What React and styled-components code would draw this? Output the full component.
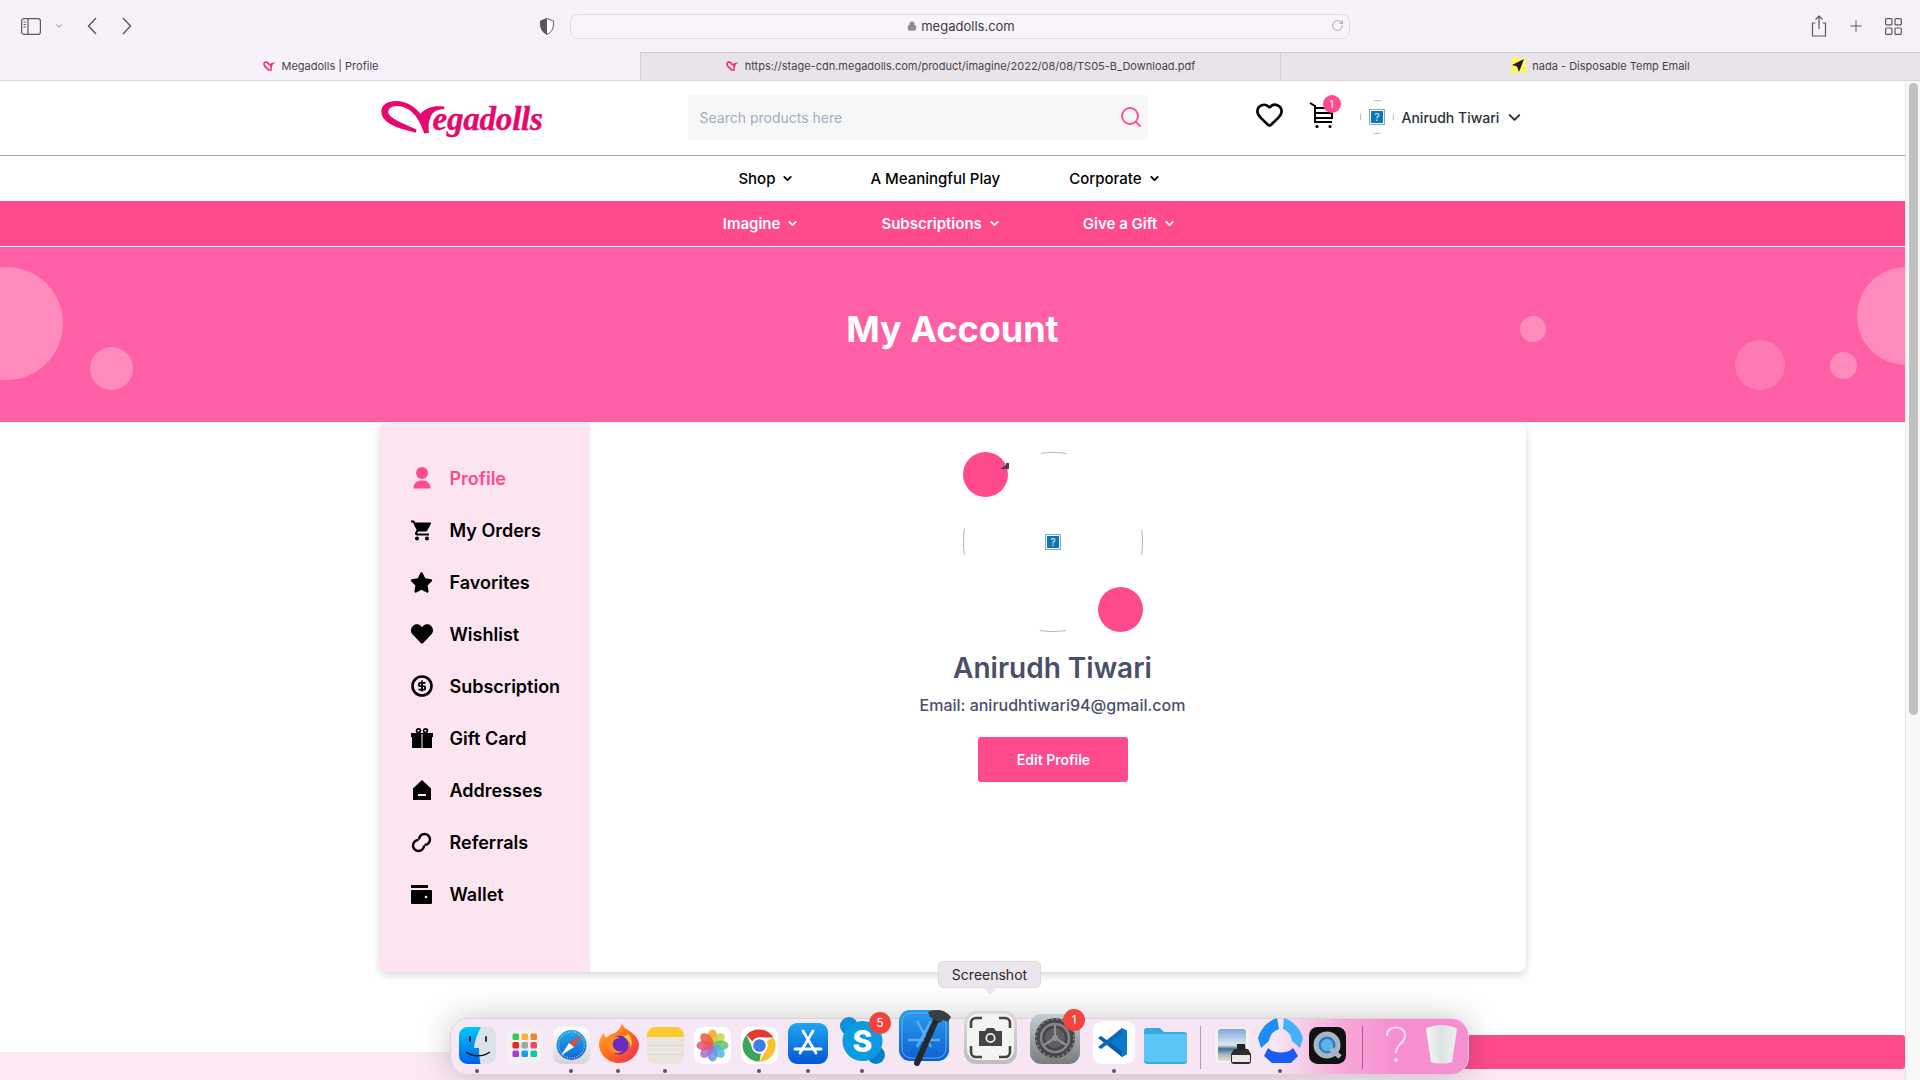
import React from "react";
import styled, { createGlobalStyle } from "styled-components";
import { ChevronDown, Search, Heart, Lock, RotateCw, Plus } from "lucide-react";
import { FaHeart, FaStar } from "react-icons/fa";
import { MdShoppingCart } from "react-icons/md";

const Global = createGlobalStyle`
  html, body { margin: 0; padding: 0; background: #fff; }
  body { font-family: Inter, "Liberation Sans", sans-serif; }
  * { box-sizing: border-box; }
`;

const Screen = styled.div`
  position: relative; width: 1920px; height: 1080px; overflow: hidden;
  display: flex; flex-direction: column; background: #fff;
`;

/* ---------- browser chrome ---------- */
const Toolbar = styled.div`
  height: 52px; flex: none; background: #f7f2f9; display: flex; align-items: center; color: #6b676e;
`;
const LeftCluster = styled.div`
  margin-left: 21px; width: 519px; display: flex; align-items: center;
`;
const NavArrow = styled.svg`
  width: 10px; height: 18px; margin-left: ${p => p.$ml}px; fill: none; stroke: #5c585f; stroke-width: 1.4;
`;
const UrlBar = styled.div`
  margin-left: 16px; width: 780px; height: 25px; border: 1px solid #e2dde5; border-radius: 8px;
  background: #f8f4fa; display: flex; align-items: center; justify-content: center; position: relative;
  font-size: 13px; color: #3d3a40; gap: 4px; padding-left: 2px;
`;
const Reload = styled.span`
  position: absolute; right: 5px; top: 4px; display: flex; color: #8a868d;
`;
const RightTools = styled.div`
  margin-left: auto; margin-right: 18px; display: flex; align-items: center; gap: 20px;
`;
const Tabs = styled.div`
  height: 29px; flex: none; display: flex; border-bottom: 1px solid #d8d5d9;
`;
const Tab = styled.div`
  flex: 1; display: flex; align-items: center; justify-content: center; gap: 6px; font-size: 11px; padding-bottom: 2px;
  color: #47444a; background: ${p => (p.$active ? "#f7f2f9" : "#e8e4ea")};
  border-top: 1px solid ${p => (p.$active ? "#f7f2f9" : "#cfcbd0")};
  border-left: 1px solid ${p => (p.$first ? "transparent" : "#d4d0d5")};
`;

/* ---------- page ---------- */
const Viewport = styled.div`
  flex: 1; display: flex; min-height: 0;
`;
const Page = styled.div`
  flex: 1; min-width: 0; display: flex; flex-direction: column; overflow: hidden;
`;
const Scrollbar = styled.div`
  width: 15px; flex: none; background: #f8f8f8; border-left: 1px solid #e6e6e6; padding: 2px 2px 0 3px;
`;
const ScrollThumb = styled.div`
  height: 632px; background: #c1c1c1; border-radius: 5px;
`;
const Header = styled.header`
  height: 75px; flex: none; border-bottom: 1px solid #a3a8b2; display: flex; justify-content: center;
`;
const HeaderInner = styled.div`
  width: 1146px; flex: none; display: flex; align-items: center; padding-bottom: 2px;
`;
const LogoWrap = styled.div`
  width: 308px; flex: none; display: flex; align-items: center; margin-bottom: 1px;
`;
const LogoText = styled.span`
  font-family: "Liberation Serif", serif; font-weight: 700; font-style: italic; font-size: 33px; letter-spacing: -0.2px;
  color: #e6086f; margin-left: -13px; margin-top: 4px; line-height: 30px; -webkit-text-stroke: .4px #e6086f;
`;
const SearchBox = styled.div`
  width: 460px; height: 45px; flex: none; background: #f7f7f7; border-radius: 4px; display: flex; align-items: center;
  justify-content: space-between; padding: 0 5px 0 12px; font-size: 14px; color: #a0aec0;
`;
const Actions = styled.div`
  margin-left: 107px; display: flex; align-items: center; color: #000; flex: none;
`;
const HeartWrap = styled.span`
  display: flex; margin-bottom: 5px;
`;
const CartWrap = styled.div`
  position: relative; margin-left: 24px; margin-bottom: 4px; width: 28px; height: 28px; display: flex;
`;
const CountBadge = styled.span`
  position: absolute; left: 15px; top: -6px; width: 18px; height: 18px; border-radius: 50%; background: #ff4a8d;
  color: #fff; font-size: 10px; display: flex; align-items: center; justify-content: center;
`;
const SmallAvatar = styled.div`
  margin-left: 24px; width: 34px; height: 34px; position: relative; display: flex; align-items: center; justify-content: center;
`;
const UserName = styled.span`
  margin-left: 8px; font-size: 14px; font-weight: 500; color: #2d3036; white-space: nowrap;
`;
const UserChevron = styled.span`
  margin-left: 6px; display: flex; color: #2d3036;
`;
const NavRow = styled.nav`
  height: ${p => p.$h}px; flex: none; display: flex; align-items: center; justify-content: center; gap: ${p => p.$gap}px;
  padding-right: ${p => p.$pr}px; color: ${p => (p.$pink ? "#fff" : "#000")}; background: ${p => (p.$pink ? "#ff4a8d" : "#fff")};
  font-weight: ${p => (p.$pink ? 600 : 500)}; font-size: 15px;
  ${p => p.$pink && "border-bottom: 1px solid #fff;"}
`;
const NavItem = styled.span`
  display: inline-flex; align-items: center; gap: 6px; margin-right: ${p => p.$mr || 0}px;
`;
const Hero = styled.section`
  position: relative; height: 175px; flex: none; background: #ff5fa5; overflow: hidden;
  display: flex; align-items: center; justify-content: center;
`;
const HeroTitle = styled.h1`
  margin: -11px 0 0; font-size: 36px; font-weight: 700; color: #fff; line-height: 44px;
`;
const Bubble = styled.span`
  position: absolute; left: ${p => p.$x}px; top: ${p => p.$y}px; width: ${p => p.$d}px; height: ${p => p.$d}px;
  border-radius: 50%; background: ${p => p.$c || "#ff8bbd"};
`;
const Card = styled.main`
  width: 1146px; height: 549px; flex: none; margin: 1px auto 0; display: flex; border-radius: 8px; background: #fff;
  box-shadow: 0 3px 9px rgba(0,0,0,.16); overflow: hidden;
`;
const Sidebar = styled.aside`
  width: 210px; flex: none; background: #fde4f1; padding: 29px 0 0 30px; display: flex; flex-direction: column;
`;
const MenuItem = styled.div`
  height: 52px; display: flex; align-items: center; gap: 16px; font-size: 18px; font-weight: 600;
  color: ${p => (p.$active ? "#ff4a8d" : "#000")};
`;
const MenuIcon = styled.span`
  width: 24px; height: 24px; display: flex; align-items: center; justify-content: center;
`;
const Content = styled.div`
  flex: 1; display: flex; flex-direction: column; align-items: center; padding: 29px 10px 0 0; color: #4a4f68;
`;
const AvatarBox = styled.div`
  position: relative; width: 180px; height: 180px; display: flex; align-items: center; justify-content: center;
`;
const AvatarDot = styled.span`
  position: absolute; width: 45px; height: 45px; border-radius: 50%; background: #ff4a8d;
  ${p => (p.$end ? "right: 0; bottom: 0;" : "left: 0; top: 0;")}
`;
const TinyMark = styled.svg`
  position: absolute; left: 37px; top: 11px; width: 9px; height: 6px;
`;
const Name = styled.h2`
  margin: 19px 0 0; font-size: 28px; line-height: 34px; font-weight: 600;
`;
const Email = styled.p`
  margin: 8px 0 0; font-size: 16px; line-height: 24px; font-weight: 500;
`;
const EditButton = styled.button`
  margin-top: 20px; width: 150px; height: 45px; border: 0; border-radius: 3px; background: #ff4a8d; color: #fff;
  font-family: inherit; font-size: 14px; font-weight: 600; padding: 0 0 0 2px;
`;
const Footer = styled.footer`
  flex: 1; margin-top: 80px; background: #fae9f2; display: flex; justify-content: flex-end; align-items: flex-start;
`;
const FooterBar = styled.div`
  width: 660px; height: 34px; margin-top: -17px; background: #ff4a8d; border-radius: 3px;
`;

/* ---------- dock ---------- */
const Dock = styled.div`
  position: absolute; left: 450px; top: 1018px; width: 1019px; height: 57px; border-radius: 18px;
  display: flex; align-items: flex-end; padding: 0 5px 10px 2px; border: 1px solid #dcd2dc;
  background: linear-gradient(90deg, #f6e8f4 0%, #f6e6f3 81%, #f7a6d8 88%, #f68fd0 93%, #f68fd0 100%);
  box-shadow: 0 0 32px rgba(0,0,0,.22);
`;
const DockSlot = styled.div`
  position: relative; width: ${p => p.$w}px; flex: none; display: flex; justify-content: center; align-items: flex-end;
`;
const DockDot = styled.span`
  position: absolute; left: 50%; bottom: -9px; margin-left: -2px; width: 4px; height: 4px; border-radius: 50%; background: #5c5560;
`;
const DockBadge = styled.span`
  position: absolute; left: ${p => p.$x}px; top: ${p => p.$y}px; width: 22px; height: 22px; border-radius: 50%;
  background: #f0443c; color: #fff; font-size: 11.5px; display: flex; align-items: center; justify-content: center;
`;
const Separator = styled.div`
  width: ${p => p.$w}px; flex: none; height: 43px; margin-bottom: -5px; display: flex; justify-content: center;
  &::before { content: ""; width: 1px; height: 100%; background: ${p => p.$c}; }
`;
const DockTip = styled.div`
  position: absolute; left: 938px; top: 961px; width: 103px; height: 27px; border-radius: 5px; background: #ece6ec;
  border: 1px solid #dfd9df; color: #2b282c; font-size: 14px; display: flex; align-items: center; justify-content: center;
  &::after {
    content: ""; position: absolute; left: 44px; bottom: -8px; border-left: 7px solid transparent;
    border-right: 7px solid transparent; border-top: 8px solid #ece6ec;
  }
`;

/* ---------- drawings ---------- */
const Tangents = ({ size, dash, stroke = "#b5b5b5" }) => {
  const r = size / 2 - 0.5;
  const c = 2 * Math.PI * r;
  return (
    <svg width={size} height={size} style={{ position: "absolute", left: 0, top: 0 }}>
      <circle cx={size / 2} cy={size / 2} r={r} fill="none" stroke={stroke} strokeWidth="1"
        strokeDasharray={`${dash} ${c / 4 - dash}`} strokeDashoffset={dash / 2} />
    </svg>
  );
};
const BrokenImage = ({ s = 16 }) => (
  <svg width={s} height={s} viewBox="0 0 16 16">
    <rect x=".5" y=".5" width="15" height="15" fill="#fff" stroke="#7fa9cc" />
    <rect x="2" y="2" width="12" height="12" fill="#0b78b5" />
    <text x="8" y="12" textAnchor="middle" fontSize="10" fontFamily="Inter, sans-serif" fill="#e6f2fa">?</text>
  </svg>
);
const LogoMark = () => (
  <svg width="66" height="36" viewBox="28 30 166 92">
    <path fill="#e6086f" d="M30 62C30 42 52 32 78 36C100 40 118 52 130 68C145 52 165 46 192 50L190 56C172 56 160 62 155 78C150 92 150 105 152 116L140 118C132 100 130 92 122 80C108 58 88 48 70 48C55 48 46 56 48 66C52 80 85 92 120 108L118 116C85 108 30 95 30 62Z" />
  </svg>
);
const Fav = () => (
  <svg width="13" height="12" viewBox="0 0 26 24">
    <path fill="none" stroke="#ee2c7c" strokeWidth="3.4" d="M13 10C10 3 2 2 2 8c0 6 8 10 11 13" />
    <path fill="#ee2c7c" d="M13 10c3-5 9-6 12-4-4 0-6 3-7 8l-1 8h-3l1-8z" />
  </svg>
);
const PlaneFav = () => (
  <svg width="15" height="15" viewBox="0 0 15 15">
    <rect width="15" height="15" fill="#fdf86a" />
    <path fill="#1c1c1c" d="M13 1L1 7l5 1.5L8 14z" />
  </svg>
);
const ChevSm = () => <ChevronDown size={13} strokeWidth={3.4} />;

const ProfileIcon = () => (
  <svg width="20" height="22" viewBox="0 0 20 22" fill="currentColor">
    <circle cx="10" cy="6" r="6" />
    <path d="M1.5 21.5c0-5.5 3.5-8 8.5-8s8.5 2.500 8.500 8z" />
  </svg>
);
const DollarRing = () => (
  <svg width="22" height="22" viewBox="0 0 22 22">
    <circle cx="11" cy="11" r="9.500" fill="none" stroke="#000" strokeWidth="2.600" />
    <path d="M14.500 7.800H9.500a1.700 1.700 0 0 0 0 3.400h3a1.700 1.700 0 0 1 0 3.400H7.500M11 5.500v11" fill="none" stroke="#000" strokeWidth="1.800" />
  </svg>
);
const GiftIcon = () => (
  <svg width="22" height="20" viewBox="0 0 22 20">
    <circle cx="7.500" cy="2.800" r="1.900" fill="none" stroke="#000" strokeWidth="1.800" />
    <circle cx="14.500" cy="2.800" r="1.900" fill="none" stroke="#000" strokeWidth="1.800" />
    <rect x="0" y="5" width="22" height="4" fill="#000" />
    <rect x="1" y="9" width="20" height="11" fill="#000" />
    <rect x="10" y="6" width="2" height="14" fill="#8a7480" />
  </svg>
);
const HomeIcon = () => (
  <svg width="20" height="20" viewBox="0 0 20 20">
    <path fill="#000" d="M1 8.500 10 0l9 8.500V20H1z" />
    <rect x="6" y="14" width="8" height="2" fill="#fde4f1" />
  </svg>
);
const LinkIcon = () => (
  <svg width="21" height="21" viewBox="0 0 21 21" fill="none" stroke="#000" strokeWidth="2.400">
    <path d="M8 7.500A5.500 5.500 0 1 1 13.500 13" />
    <path d="M13 13.500A5.500 5.500 0 1 1 7.500 8" />
  </svg>
);
const WalletIcon = () => (
  <svg width="21" height="19" viewBox="0 0 21 19">
    <rect x="0" y="0" width="17" height="3" fill="#000" />
    <rect x="0" y="5" width="21" height="14" rx="1" fill="#000" />
    <circle cx="15" cy="12" r="1.300" fill="#fde4f1" />
  </svg>
);

const sq = { rx: 8.500 };
const Finder = () => (
  <svg width="37" height="37" viewBox="0 0 37 37">
    <defs><linearGradient id="fb" x1="0" y1="0" x2="0" y2="1"><stop offset="0" stopColor="#00c8fd" /><stop offset="1" stopColor="#0061e8" /></linearGradient></defs>
    <rect width="37" height="37" {...sq} fill="#dbe3e9" />
    <path d="M8.500 0H22C18 8 15.500 14 15 21h5c0 5 .5 11 1.500 16H8.500A8.500 8.500 0 0 1 0 28.500V8.500A8.500 8.500 0 0 1 8.500 0z" fill="url(#fb)" />
    <rect x="10" y="9" width="2" height="6" rx="1" fill="#111" /><rect x="26" y="9" width="2" height="6" rx="1" fill="#333" />
    <path d="M7 25c7 5 17 5 24 0" stroke="#111" strokeWidth="1.300" fill="none" />
  </svg>
);
const Launchpad = () => {
  const colors = ["#34c759", "#f7b32b", "#f5842b", "#e5262c", "#a3a6a8", "#f2456a", "#a340d8", "#149df0", "#10c7a0"];
  return (
    <svg width="37" height="37" viewBox="0 0 37 37">
      <rect width="37" height="37" {...sq} fill="#f3eff3" />
      {colors.map((c, i) => <rect key={c} x={6.500 + (i % 3) * 9} y={6.500 + Math.floor(i / 3) * 8.500} width="6.500" height="6.500" rx="1.500" fill={c} />)}
    </svg>
  );
};
const Safari = () => (
  <svg width="37" height="37" viewBox="0 0 37 37">
    <defs><linearGradient id="sb" x1="0" y1="0" x2="0" y2="1"><stop offset="0" stopColor="#22a9ec" /><stop offset="1" stopColor="#1565cf" /></linearGradient>
      <linearGradient id="sg" x1="0" y1="0" x2="0" y2="1"><stop offset="0" stopColor="#fff" /><stop offset="1" stopColor="#d5d5d5" /></linearGradient></defs>
    <rect width="37" height="37" {...sq} fill="url(#sg)" />
    <circle cx="18.500" cy="18" r="15" fill="url(#sb)" />
    <circle cx="18.500" cy="18" r="13" fill="none" stroke="#cfe6f7" strokeWidth="1.500" strokeDasharray=".6 1.800" />
    <path d="M29 7.500 16 16l5 4z" fill="#f0453c" /><path d="M8 28.500 16 16l5 4z" fill="#fff" />
  </svg>
);
const Firefox = () => (
  <svg width="41" height="41" viewBox="0 0 41 41">
    <defs><linearGradient id="ff" x1="0" y1="0" x2="1" y2="1"><stop offset="0" stopColor="#ffbc2e" /><stop offset=".5" stopColor="#ff6a1f" /><stop offset="1" stopColor="#f0245c" /></linearGradient></defs>
    <path d="M24 0c1 5 5 6 9 9 5 4 8 8 8 13a20 19 0 1 1-40-2c1-5 3-8 5-10 0 3 1 4 3 5 2-3 4-4 8-5 3-2 6-5 7-10z" fill="url(#ff)" />
    <circle cx="21" cy="22" r="9.500" fill="#6c2bc0" />
    <path d="M9 14c5-2 10-1 13 1-5 0-8 3-7 8 1 4 5 6 10 5-7 5-15 1-17-5-1-3 0-6 1-9z" fill="#ff8a1f" />
    <path d="M26 14c5 3 8 8 6 13 3-7 2-13-2-16z" fill="#ffce3a" />
  </svg>
);
const Notes = () => (
  <svg width="37" height="37" viewBox="0 0 37 37">
    <rect width="37" height="37" {...sq} fill="#e9e4dd" />
    <path d="M8.500 0h20A8.500 8.500 0 0 1 37 8.500V10H0V8.500A8.500 8.500 0 0 1 8.500 0z" fill="#fdc92f" />
    <path d="M0 18.500h37M0 27.500h37" stroke="#d7d2ca" strokeWidth=".8" />
  </svg>
);
const Photos = () => {
  const cols = ["#f5a623", "#c9d34a", "#5fc46a", "#4fb9dd", "#6f8fe0", "#a56fcf", "#e3547e", "#f0583f"];
  return (
    <svg width="37" height="37" viewBox="0 0 37 37">
      <rect width="37" height="37" {...sq} fill="#fff" />
      {cols.map((c, i) => <ellipse key={c} cx="18.500" cy="10.500" rx="5" ry="8" fill={c} opacity=".85" transform={`rotate(${i * 45} 18.500 18.500)`} />)}
    </svg>
  );
};
const Chrome = () => (
  <svg width="37" height="37" viewBox="0 0 37 37">
    <rect width="37" height="37" {...sq} fill="#fff" />
    <path d="M18.500 2.500a16 16 0 0 1 13.900 8H18.500a8 8 0 0 0-7 4L5.500 8a16 16 0 0 1 13-5.500z" fill="#e33b2e" />
    <path d="M32.400 10.500A16 16 0 0 1 18.500 34.500l6.900-12a8 8 0 0 0 0-8z" fill="#fbc02d" />
    <path d="M18.500 34.500A16 16 0 0 1 5.500 8l6.500 14a8 8 0 0 0 8 4.400z" fill="#3ba55d" />
    <circle cx="18.500" cy="18.500" r="8" fill="#fff" /><circle cx="18.500" cy="18.500" r="6.300" fill="#3d7de8" />
  </svg>
);
const AppStore = () => (
  <svg width="40" height="41" viewBox="0 0 40 41">
    <defs><linearGradient id="ab" x1="0" y1="0" x2="0" y2="1"><stop offset="0" stopColor="#1fa6f2" /><stop offset="1" stopColor="#0457d6" /></linearGradient></defs>
    <rect width="40" height="41" rx="9" fill="url(#ab)" />
    <path d="M15 8l13 22M25 8L12 30M7 26h26" stroke="#fff" strokeWidth="2.800" strokeLinecap="round" fill="none" />
  </svg>
);
const Skype = () => (
  <svg width="45" height="47" viewBox="0 0 45 47">
    <circle cx="9" cy="9" r="9" fill="#0a8fd8" /><circle cx="36" cy="38" r="9" fill="#0a7fc8" />
    <circle cx="22.500" cy="24" r="20" fill="#0a9be2" />
    <text x="22.500" y="35" textAnchor="middle" fontSize="30" fontWeight="800" fontFamily="Inter, sans-serif" fill="#fff">S</text>
  </svg>
);
const Xcode = () => (
  <svg width="52" height="55" viewBox="0 0 52 55" style={{ overflow: "visible" }}>
    <defs><linearGradient id="xb" x1="0" y1="0" x2="0" y2="1"><stop offset="0" stopColor="#2a9df0" /><stop offset="1" stopColor="#0d5fd0" /></linearGradient></defs>
    <rect x="0" y="1" width="50" height="51" rx="11" fill="url(#xb)" />
    <rect x="3" y="4" width="44" height="45" rx="9" fill="none" stroke="#6fbcf4" strokeWidth=".8" />
    <path d="M18 12l14 26M32 12L18 38M9 31h32" stroke="#5aaeee" strokeWidth="2.500" fill="none" />
    <path d="M38 9L18 54" stroke="#25282d" strokeWidth="6" strokeLinecap="round" />
    <path d="M29 3c8-4 18-2 23 5l-3 5-5-2-3 3-10-6z" fill="#3b3e44" />
  </svg>
);
const Screenshot = () => (
  <svg width="53" height="53" viewBox="0 0 53 53">
    <defs><linearGradient id="ss" x1="0" y1="0" x2="0" y2="1"><stop offset="0" stopColor="#dcdcdc" /><stop offset="1" stopColor="#bdbdbd" /></linearGradient></defs>
    <rect width="53" height="53" rx="12" fill="url(#ss)" />
    <rect x="3" y="3" width="47" height="46" rx="10" fill="#f4f4f4" />
    <path d="M7 17v-5a5 5 0 0 1 5-5h6M35 7h6a5 5 0 0 1 5 5v5M46 35v6a5 5 0 0 1-5 5h-6M18 46h-6a5 5 0 0 1-5-5v-6" fill="none" stroke="#444" strokeWidth="2.600" />
    <path d="M15 20h6l2-3h7l2 3h6v15H15z" fill="#444" />
    <circle cx="26.500" cy="27" r="4.200" fill="none" stroke="#f0f0f0" strokeWidth="1.800" />
  </svg>
);
const Settings = () => (
  <svg width="50" height="50" viewBox="0 0 50 50">
    <defs><linearGradient id="st" x1="0" y1="0" x2="0" y2="1"><stop offset="0" stopColor="#c5ced2" /><stop offset="1" stopColor="#7b7b7d" /></linearGradient></defs>
    <rect width="50" height="50" rx="11" fill="url(#st)" />
    <circle cx="25" cy="24" r="20" fill="#46474a" />
    <circle cx="25" cy="24" r="19" fill="none" stroke="#77787a" strokeWidth="2" strokeDasharray="2.500 2.500" />
    <circle cx="25" cy="24" r="14" fill="none" stroke="#858688" strokeWidth="2.500" />
    <circle cx="25" cy="24" r="10" fill="#5d5e60" />
    <path d="M25 24V11M25 24l11 7M25 24l-11 7" stroke="#8f9092" strokeWidth="2.200" />
    <circle cx="25" cy="24" r="3" fill="#8f9092" />
  </svg>
);
const VSCode = () => (
  <svg width="42" height="43" viewBox="0 0 42 43">
    <rect width="42" height="43" rx="9" fill="#fff" />
    <path d="M29 7l5 2.500v24L29 36 14 22.500z" fill="#0a79cb" />
    <path d="M29 36 5 17l3-2 21 15z" fill="#0a5fa8" /><path d="M29 7 5 26l3 2 21-15z" fill="#0a68b4" />
  </svg>
);
const Folder = () => (
  <svg width="43" height="37" viewBox="0 0 43 37">
    <path d="M3 1h13l4 4h20a3 3 0 0 1 3 3v26a3 3 0 0 1-3 3H3a3 3 0 0 1-3-3V4a3 3 0 0 1 3-3z" fill="#38a8e2" />
    <rect y="7" width="43" height="28" rx="2" fill="#5ac6f7" />
  </svg>
);
const Preview = () => (
  <svg width="37" height="37" viewBox="0 0 37 37">
    <defs><linearGradient id="pv" x1="0" y1="0" x2="0" y2="1"><stop offset="0" stopColor="#7fa6e2" /><stop offset=".5" stopColor="#dfe6f2" /><stop offset=".62" stopColor="#3d7194" /><stop offset=".8" stopColor="#a9b7bc" /><stop offset="1" stopColor="#e6e0da" /></linearGradient></defs>
    <rect width="34" height="36" rx="6" fill="#f6f2ec" />
    <rect x="3" y="2" width="28" height="32" rx="3" fill="url(#pv)" />
    <rect x="22" y="17" width="8" height="5" fill="#222" />
    <path d="M19 22h14l3 5v7a3 3 0 0 1-3 3H19a3 3 0 0 1-3-3v-7z" fill="#2c2c2e" />
    <rect x="17" y="28" width="18" height="7" fill="#e8e8ea" />
  </svg>
);
const BladeLogo = () => (
  <svg width="45" height="46" viewBox="0 0 45 46">
    <path d="M19 0 21 11C15 13 12 17 11 23L3 30 0 20C3 10 10 3 19 0z" fill="#1b8df5" />
    <path d="M26 0C35 3 42 10 45 20L42 30 34 23C33 17 30 13 25 11z" fill="#45b1fb" />
    <path d="M10 30C15 36 30 36 35 30L40 38 33 45H14L6 38z" fill="#1a5cf5" />
  </svg>
);
const QuickTime = () => (
  <svg width="37" height="37" viewBox="0 0 37 37">
    <rect width="37" height="37" {...sq} fill="#111" />
    <circle cx="18" cy="18" r="11" fill="#2e7fc0" stroke="#a7b6c4" strokeWidth="5" />
    <path d="M21 21l10 9" stroke="#a7b6c4" strokeWidth="5" />
    <circle cx="18" cy="18" r="6" fill="#5ab4ea" />
  </svg>
);
const Help = () => (
  <svg width="22" height="38" viewBox="0 0 22 38">
    <path d="M2 10C2 4 6 1.500 11 1.500S20 4 20 10c0 7-9 8-9 17" fill="none" stroke="#fbd8ee" strokeWidth="2.200" />
    <circle cx="11" cy="34" r="2" fill="#fbd8ee" />
  </svg>
);
const Trash = () => (
  <svg width="33" height="39" viewBox="0 0 33 39">
    <defs><linearGradient id="tr" x1="0" y1="0" x2="1" y2="0"><stop offset="0" stopColor="#f4f6f6" /><stop offset=".5" stopColor="#dde3e3" /><stop offset="1" stopColor="#eef1f1" /></linearGradient></defs>
    <path d="M1 4c6-5 25-5 31 0l-5 33c-4 2-17 2-21 0z" fill="url(#tr)" />
  </svg>
);

const menu = [
  ["Profile", <ProfileIcon />, true],
  ["My Orders", <MdShoppingCart size={27} />],
  ["Favorites", <FaStar size={23} />],
  ["Wishlist", <FaHeart size={22} />],
  ["Subscription", <DollarRing />],
  ["Gift Card", <GiftIcon />],
  ["Addresses", <HomeIcon />],
  ["Referrals", <LinkIcon />],
  ["Wallet", <WalletIcon />],
];

const dockApps = [
  [48, <Finder />, true], [46, <Launchpad />], [48, <Safari />, true], [46, <Firefox />, true],
  [48, <Notes />, true], [46, <Photos />], [48, <Chrome />, true], [50, <AppStore />, true],
];

export default function App() {
  return (
    <Screen>
      <Global />
      <Toolbar>
        <LeftCluster>
          <svg width="20" height="17" viewBox="0 0 20 17" fill="none" stroke="#5c585f" strokeWidth="1.200">
            <rect x=".6" y=".6" width="18.800" height="15.800" rx="2.500" />
            <path d="M7 1v15" /><path d="M2.500 4h2.500M2.500 6.500h2.500M2.500 9h2.500" strokeWidth=".9" />
          </svg>
          <ChevronDown size={10} strokeWidth={2} style={{ marginLeft: 13, color: "#6b676e" }} />
          <NavArrow $ml={23} viewBox="0 0 10 18"><path d="M9 1 1.500 9 9 17" /></NavArrow>
          <NavArrow $ml={25} viewBox="0 0 10 18"><path d="M1 1l7.500 8L1 17" /></NavArrow>
        </LeftCluster>
        <svg width="14" height="17" viewBox="0 0 14 17">
          <path d="M7 .5 13.500 3c0 6 0 10-6.500 13.500C.5 13 .5 9 .5 3z" fill="#fff" stroke="#5a565c" />
          <path d="M7 .5 .5 3C.5 9 .5 13 7 16.500z" fill="#5a565c" />
        </svg>
        <UrlBar>
          <Lock size={10} fill="#8e8a91" color="#8e8a91" />
          megadolls.com
          <Reload><RotateCw size={13} strokeWidth={1.300} /></Reload>
        </UrlBar>
        <RightTools>
          <svg width="16" height="22" viewBox="0 0 16 22" fill="none" stroke="#5c585f" strokeWidth="1.200">
            <path d="M4.500 8H1.500v13h13V8h-3M8 14V1M4.500 4.500 8 1l3.500 3.500" />
          </svg>
          <Plus size={18} strokeWidth={1.300} color="#5c585f" />
          <svg width="17" height="17" viewBox="0 0 17 17" fill="none" stroke="#5c585f" strokeWidth="1.200">
            <rect x=".6" y=".6" width="6.300" height="6.300" rx="1" /><rect x="10" y=".6" width="6.300" height="6.300" rx="1" />
            <rect x=".6" y="10" width="6.300" height="6.300" rx="1" /><rect x="10" y="10" width="6.300" height="6.300" rx="1" />
          </svg>
        </RightTools>
      </Toolbar>
      <Tabs>
        <Tab $active $first><Fav />Megadolls | Profile</Tab>
        <Tab><Fav />https://stage-cdn.megadolls.com/product/imagine/2022/08/08/TS05-B_Download.pdf</Tab>
        <Tab><PlaneFav />nada - Disposable Temp Email</Tab>
      </Tabs>
      <Viewport>
        <Page>
          <Header>
            <HeaderInner>
              <LogoWrap><LogoMark /><LogoText>egadolls</LogoText></LogoWrap>
              <SearchBox>Search products here<Search size={24} color="#ff4a8d" strokeWidth={1.800} /></SearchBox>
              <Actions>
                <HeartWrap><Heart size={29} strokeWidth={2.200} /></HeartWrap>
                <CartWrap>
                  <svg width="28" height="28" viewBox="0 0 28 28" fill="none" stroke="#000" strokeWidth="2">
                    <path d="M2 2l5 3v16h17" /><path d="M7 7h17v10H7M7 12h17" />
                    <circle cx="9" cy="25.500" r="1.600" fill="#000" stroke="none" /><circle cx="22" cy="25.500" r="1.600" fill="#000" stroke="none" />
                  </svg>
                  <CountBadge>1</CountBadge>
                </CartWrap>
                <SmallAvatar><Tangents size={34} dash={7} /><BrokenImage /></SmallAvatar>
                <UserName>Anirudh Tiwari</UserName>
                <UserChevron><ChevronDown size={19} strokeWidth={2.500} /></UserChevron>
              </Actions>
            </HeaderInner>
          </Header>
          <NavRow $h={45} $gap={69} $pr={6}>
            <NavItem $mr={7}>Shop <ChevSm /></NavItem>
            <NavItem>A Meaningful Play</NavItem>
            <NavItem>Corporate <ChevSm /></NavItem>
          </NavRow>
          <NavRow $h={46} $gap={82} $pr={6} $pink>
            <NavItem>Imagine <ChevSm /></NavItem>
            <NavItem>Subscriptions <ChevSm /></NavItem>
            <NavItem>Give a Gift <ChevSm /></NavItem>
          </NavRow>
          <Hero>
            <Bubble $x={-50} $y={20} $d={113} />
            <Bubble $x={90} $y={100} $d={43} />
            <Bubble $x={1520} $y={69} $d={26} />
            <Bubble $x={1735} $y={93} $d={50} $c="#ff7ab3" />
            <Bubble $x={1830} $y={105} $d={27} />
            <Bubble $x={1857} $y={20} $d={98} />
            <HeroTitle>My Account</HeroTitle>
          </Hero>
          <Card>
            <Sidebar>
              {menu.map(([label, icon, active]) => (
                <MenuItem key={label} $active={active}><MenuIcon>{icon}</MenuIcon>{label}</MenuItem>
              ))}
            </Sidebar>
            <Content>
              <AvatarBox>
                <Tangents size={180} dash={26} />
                <AvatarDot />
                <TinyMark viewBox="0 0 9 6"><path d="M0 6 6 2V0h3v6z" fill="#3f4358" /></TinyMark>
                <AvatarDot $end />
                <BrokenImage />
              </AvatarBox>
              <Name>Anirudh Tiwari</Name>
              <Email>Email: anirudhtiwari94@gmail.com</Email>
              <EditButton>Edit Profile</EditButton>
            </Content>
          </Card>
          <Footer><FooterBar /></Footer>
        </Page>
        <Scrollbar><ScrollThumb /></Scrollbar>
      </Viewport>
      <Dock>
        {dockApps.map(([w, icon, dot], i) => (
          <DockSlot key={i} $w={w}>{icon}{dot && <DockDot />}</DockSlot>
        ))}
        <DockSlot $w={58}><Skype /><DockDot /><DockBadge $x={36} $y={-5}>5</DockBadge></DockSlot>
        <DockSlot $w={68}><Xcode /></DockSlot>
        <DockSlot $w={62}><Screenshot /></DockSlot>
        <DockSlot $w={68}><Settings /><DockBadge $x={42} $y={-5}>1</DockBadge></DockSlot>
        <DockSlot $w={50}><VSCode /><DockDot /></DockSlot>
        <DockSlot $w={52}><Folder /></DockSlot>
        <Separator $w={18} $c="#a9a0aa" />
        <DockSlot $w={48}><Preview /></DockSlot>
        <DockSlot $w={46}><BladeLogo /><DockDot /></DockSlot>
        <DockSlot $w={48}><QuickTime /></DockSlot>
        <Separator $w={22} $c="#b0589a" />
        <DockSlot $w={46}><Help /></DockSlot>
        <DockSlot $w={44}><Trash /></DockSlot>
      </Dock>
      <DockTip>Screenshot</DockTip>
    </Screen>
  );
}
